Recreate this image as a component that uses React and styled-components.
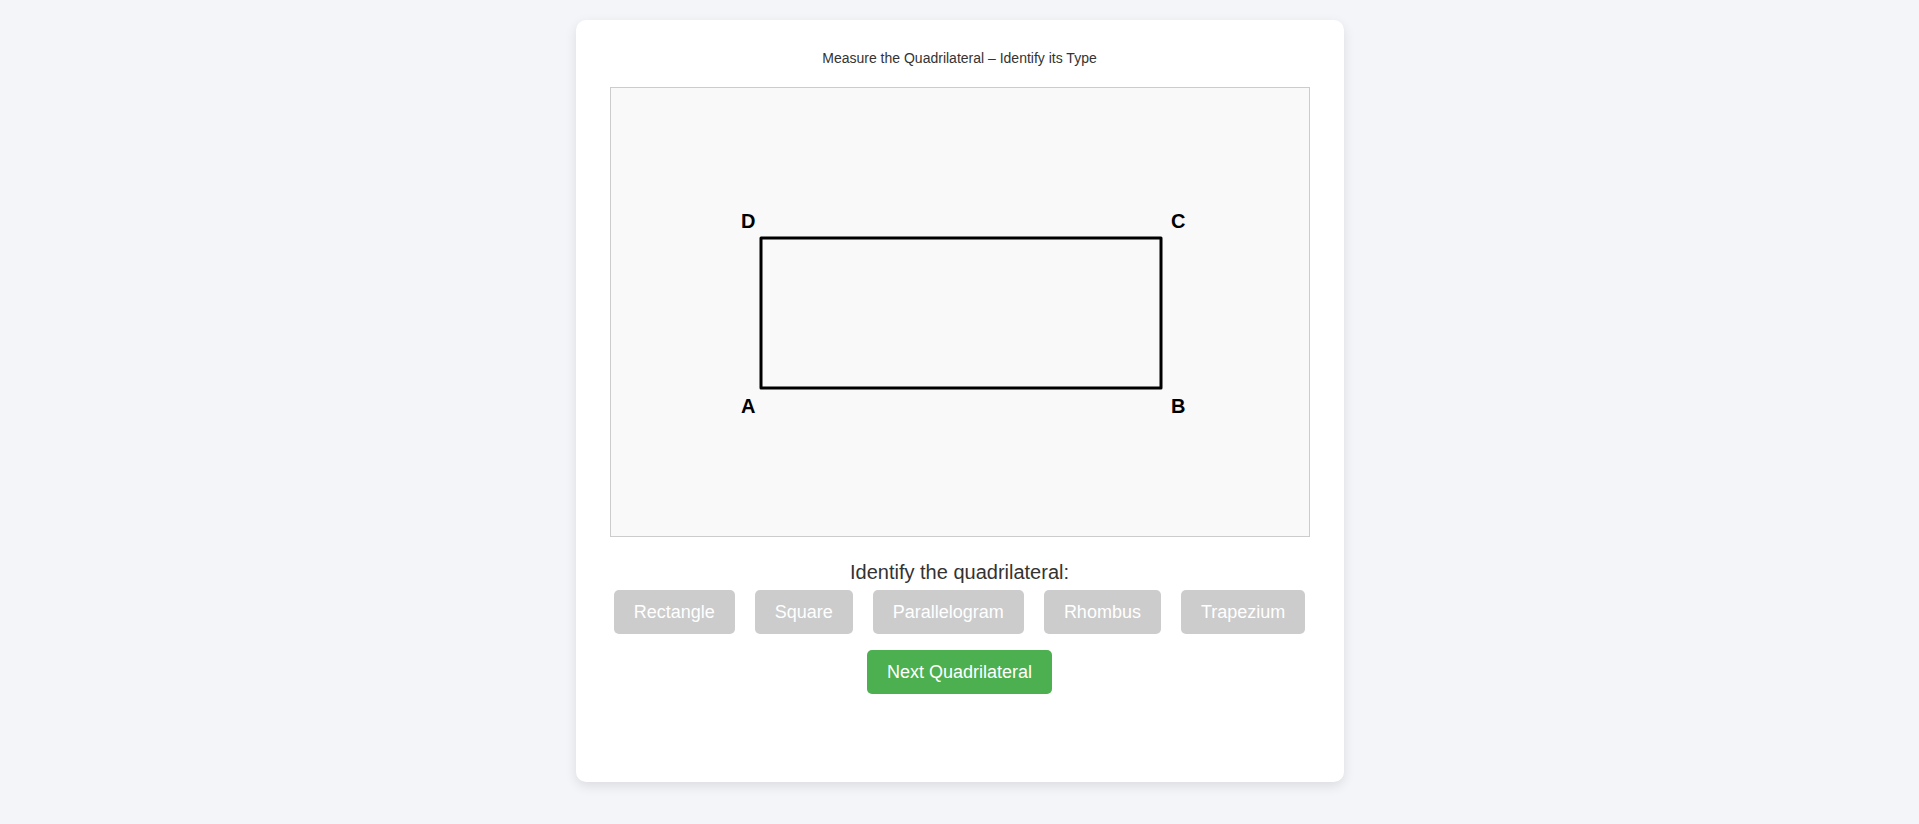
import styled, { createGlobalStyle } from "styled-components";

const GlobalStyle = createGlobalStyle`
  html, body {
    margin: 0;
    padding: 0;
    background: #f4f5f9;
    font-family: "Liberation Sans", Arial, sans-serif;
    color: #333;
  }
  * {
    box-sizing: border-box;
  }
`;

const OPTIONS = ["Rectangle", "Square", "Parallelogram", "Rhombus", "Trapezium"];

// vertices of the current figure, in board coordinates
const POINTS = [
  { label: "A", x: 150, y: 300, dx: -20, dy: 25 },
  { label: "B", x: 550, y: 300, dx: 10, dy: 25 },
  { label: "C", x: 550, y: 150, dx: 10, dy: -10 },
  { label: "D", x: 150, y: 150, dx: -20, dy: -10 },
];

export default function App() {
  const path = POINTS.map((p) => `${p.x},${p.y}`).join(" ");

  return (
    <>
      <GlobalStyle />
      <Page>
        <Card>
          <Title>Measure the Quadrilateral – Identify its Type</Title>

          <Board>
            <svg width="698" height="448" viewBox="0 0 698 448">
              <polygon
                points={path}
                fill="none"
                stroke="#000"
                strokeWidth="3"
                strokeLinejoin="round"
              />
              {POINTS.map((p) => (
                <VertexLabel key={p.label} x={p.x + p.dx} y={p.y + p.dy}>
                  {p.label}
                </VertexLabel>
              ))}
            </svg>
          </Board>

          <Question>Identify the quadrilateral:</Question>
          <Options>
            {OPTIONS.map((opt) => (
              <OptionButton key={opt} disabled>
                {opt}
              </OptionButton>
            ))}
          </Options>

          <NextButton>Next Quadrilateral</NextButton>
          <Feedback />
        </Card>
      </Page>
    </>
  );
}

const Page = styled.div`
  min-height: 100vh;
  padding-top: 20px;
`;

const Card = styled.div`
  width: 768px;
  margin: 0 auto;
  padding: 20px;
  background: #fff;
  border-radius: 10px;
  box-shadow: 0 4px 12px rgba(0, 0, 0, 0.1);
  display: flex;
  flex-direction: column;
  align-items: center;
  text-align: center;
`;

const Title = styled.div`
  font-size: 14px;
  line-height: 16px;
  margin: 10px 0 21px;
  color: #333;
`;

const Board = styled.div`
  width: 700px;
  height: 450px;
  border: 1px solid #ccc;
  background: #f9f9f9;

  svg {
    display: block;
  }
`;

const VertexLabel = styled.text`
  font-family: "Liberation Sans", Arial, sans-serif;
  font-weight: 700;
  font-size: 20px;
  fill: #000;
`;

const Question = styled.div`
  margin-top: 24px;
  font-size: 20px;
  line-height: 23px;
  color: #333;
`;

const Options = styled.div`
  margin-top: 6px;
  display: flex;
  justify-content: center;
  gap: 20px;
`;

const BaseButton = styled.button`
  font-family: "Liberation Sans", Arial, sans-serif;
  font-size: 18px;
  line-height: 20px;
  padding: 12px 20px;
  border: none;
  border-radius: 5px;
  color: #fff;
  cursor: pointer;
`;

const OptionButton = styled(BaseButton)`
  background: #ccc;

  &:disabled {
    color: #fff;
    cursor: not-allowed;
  }
`;

const NextButton = styled(BaseButton)`
  margin-top: 16px;
  background: #4caf50;
`;

const Feedback = styled.div`
  margin-top: 20px;
  min-height: 48px;
`;
